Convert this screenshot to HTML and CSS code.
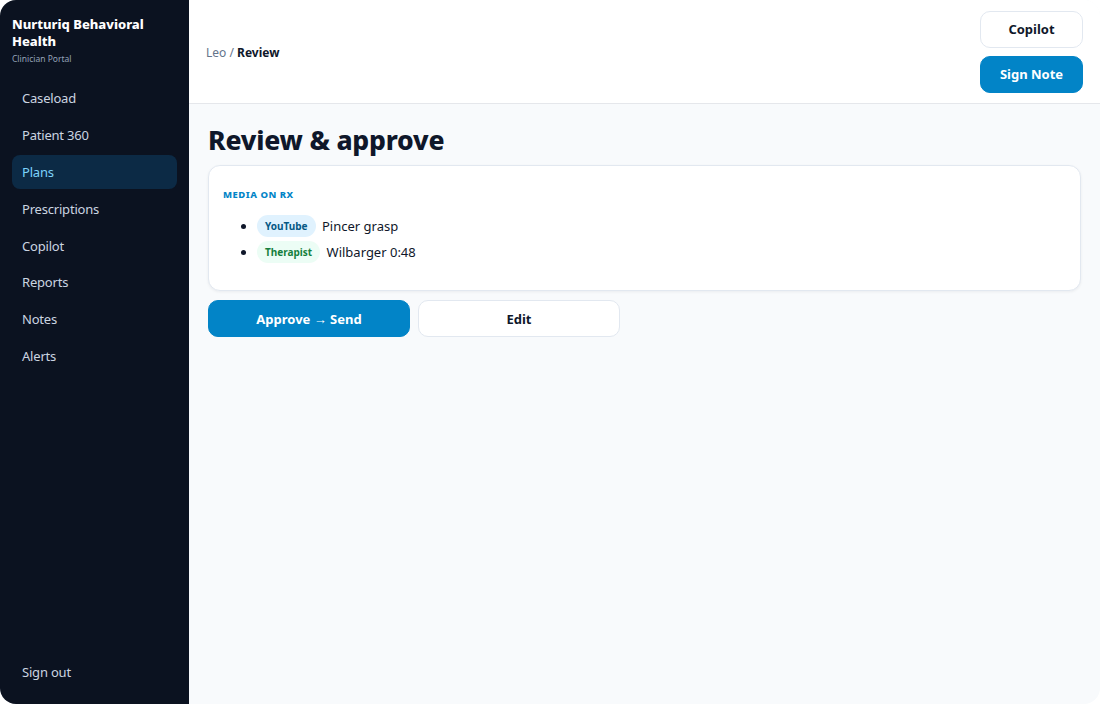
FILE: index.html
```html
<!DOCTYPE html>
<html lang="en">
<head>
<meta charset="utf-8">
<title>Review &amp; approve</title>
<link rel="stylesheet" href="styles.css">
</head>
<body>
<div class="app">
  <aside class="sidebar">
    <div class="brand">
      <div class="brand-name">Nurturiq Behavioral Health</div>
      <div class="brand-sub">Clinician Portal</div>
    </div>
    <nav class="nav">
      <a class="nav-item">Caseload</a>
      <a class="nav-item">Patient 360</a>
      <a class="nav-item active">Plans</a>
      <a class="nav-item">Prescriptions</a>
      <a class="nav-item">Copilot</a>
      <a class="nav-item">Reports</a>
      <a class="nav-item">Notes</a>
      <a class="nav-item">Alerts</a>
    </nav>
    <a class="nav-item signout">Sign out</a>
  </aside>
  <div class="main">
    <header class="topbar">
      <div class="crumbs"><span class="crumb-muted">Leo / </span><strong>Review</strong></div>
      <div class="top-actions">
        <button class="btn btn-light">Copilot</button>
        <button class="btn btn-primary">Sign Note</button>
      </div>
    </header>
    <section class="content">
      <h1 class="title">Review &amp; approve</h1>
      <div class="card">
        <div class="card-label">MEDIA ON RX</div>
        <ul class="media-list">
          <li><span class="pill pill-blue">YouTube</span> Pincer grasp</li>
          <li><span class="pill pill-green">Therapist</span> Wilbarger 0:48</li>
        </ul>
      </div>
      <div class="actions">
        <button class="btn btn-primary btn-wide">Approve → Send</button>
        <button class="btn btn-light btn-wide">Edit</button>
      </div>
    </section>
  </div>
</div>
</body>
</html>
```

FILE: styles.css
```css
* { box-sizing: border-box; }
html, body { margin: 0; height: 100%; background: #ffffff; }
body {
  font-family: "Noto Sans", "Open Sans", sans-serif;
  color: #0f172a;
}
.app {
  display: flex;
  height: 704px;
  border-radius: 16px;
  overflow: hidden;
  background: #f8fafc;
}
.sidebar {
  width: 189px;
  flex: none;
  background: #0b1220;
  display: flex;
  flex-direction: column;
  padding: 16px 12px 15px;
}
.brand-name {
  color: #ffffff;
  font-weight: 800;
  font-size: 13px;
  line-height: 17px;
}
.brand-sub {
  color: #94a3b8;
  font-size: 8.5px;
  margin-top: 3px;
}
.nav {
  display: flex;
  flex-direction: column;
  gap: 3px;
  margin-top: 17px;
  flex: 1;
}
.nav-item {
  display: block;
  height: 33.9px;
  line-height: 34px;
  padding: 0 10px;
  border-radius: 8px;
  color: #cbd5e1;
  font-size: 13px;
  letter-spacing: -0.2px;
  text-decoration: none;
}
.nav-item.active {
  background: #0c2a45;
  color: #7dd3fc;
}
.main {
  flex: 1;
  display: flex;
  flex-direction: column;
  min-width: 0;
}
.topbar {
  height: 104px;
  background: #ffffff;
  border-bottom: 1px solid #e5e7eb;
  display: flex;
  align-items: center;
  justify-content: space-between;
  padding: 10px 17px 10px 17px;
}
.crumbs { font-size: 12px; color: #0f172a; margin-top: 1px; }
.crumb-muted { color: #64748b; }
.crumbs strong { font-weight: 700; }
.top-actions {
  display: flex;
  flex-direction: column;
  gap: 8px;
  width: 103px;
}
.btn {
  font-family: inherit;
  font-weight: 700;
  font-size: 13px;
  height: 37px;
  border-radius: 10px;
  cursor: pointer;
}
.btn-light {
  background: #ffffff;
  color: #0f172a;
  border: 1px solid #e2e8f0;
}
.btn-primary {
  background: #0284c7;
  color: #ffffff;
  border: 1px solid #0284c7;
}
.content {
  padding: 17px 19px 0 19px;
}
.title {
  margin: 0 0 6px;
  font-size: 26.5px;
  font-weight: 800;
  line-height: 38px;
  letter-spacing: -0.2px;
}
.card {
  background: #ffffff;
  border: 1px solid #e2e8f0;
  border-radius: 12px;
  box-shadow: 0 1px 3px rgba(15, 23, 42, 0.06);
  padding: 22px 14px 25px;
}
.card-label {
  color: #0284c7;
  font-size: 9.5px;
  font-weight: 800;
  letter-spacing: 0.5px;
}
.media-list {
  margin: 12px 0 0;
  padding-left: 34px;
  font-size: 13px;
}
.media-list li { line-height: 26px; }
.pill {
  display: inline-block;
  font-size: 10px;
  font-weight: 700;
  line-height: 22px;
  padding: 0 8px;
  border-radius: 11px;
  margin-right: 3px;
  vertical-align: 1px;
}
.pill-blue { background: #e0f2fe; color: #075985; }
.pill-green { background: #ecfdf5; color: #15803d; }
.actions {
  display: flex;
  gap: 8px;
  margin-top: 9px;
}
.btn-wide { width: 202px; }
```
